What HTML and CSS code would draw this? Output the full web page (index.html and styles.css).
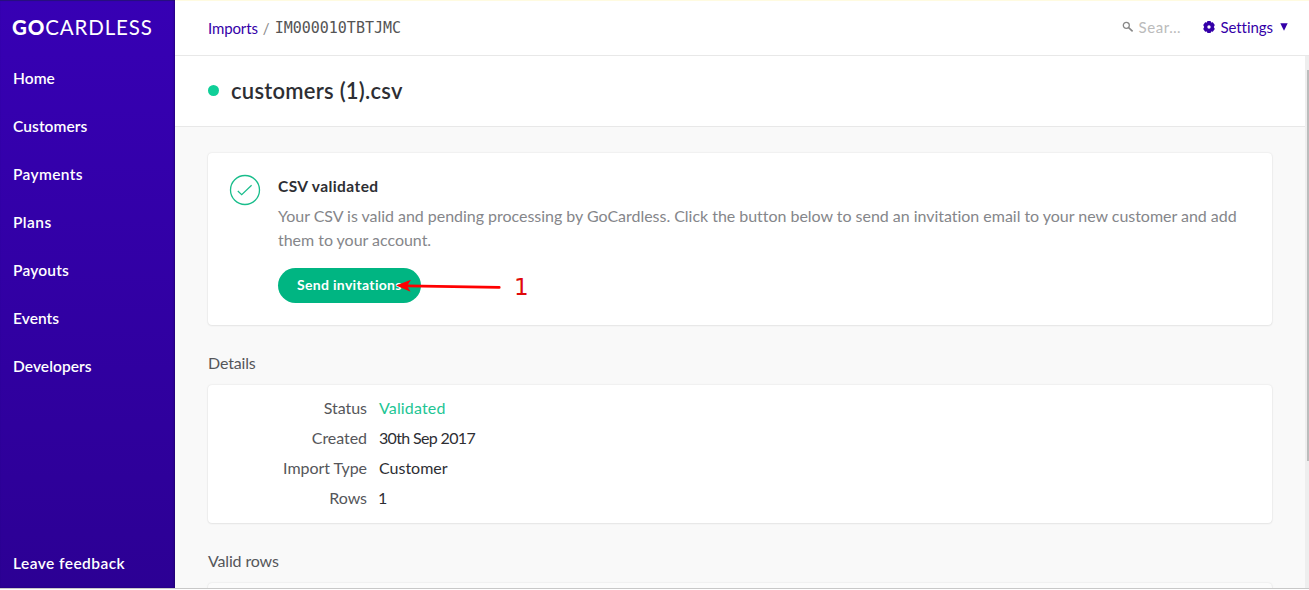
FILE: index.html
```html
<!DOCTYPE html>
<html lang="en">
<head>
<meta charset="utf-8">
<title>Imports / IM000010TBTJMC</title>
<link rel="stylesheet" href="styles.css">
</head>
<body>
<div class="app">
  <aside class="sidebar">
    <div class="logo"><b>GO</b><span>CARDLESS</span></div>
    <nav class="nav">
      <a class="nav-item home"><span>Home</span></a>
      <a class="nav-item customers"><span>Customers</span></a>
      <a class="nav-item payments"><span>Payments</span></a>
      <a class="nav-item plans"><span>Plans</span></a>
      <a class="nav-item payouts"><span>Payouts</span></a>
      <a class="nav-item events"><span>Events</span></a>
      <a class="nav-item developers"><span>Developers</span></a>
    </nav>
    <a class="nav-item feedback"><span>Leave feedback</span></a>
  </aside>
  <div class="main">
    <header class="topbar">
      <div class="crumbs"><a class="crumb-link">Imports</a><span class="slash">/</span><span class="import-id">IM000010TBTJMC</span></div>
      <div class="tools">
        <svg class="search-icon" width="12" height="12" viewBox="0 0 12 12"><circle cx="4.3" cy="4.3" r="3" fill="none" stroke="#888" stroke-width="1.3"/><path d="M6.6 6.6 L10.6 10.4" stroke="#888" stroke-width="1.6"/></svg>
        <span class="search">Sear…</span>
        <svg class="gear" width="12" height="12" viewBox="0 0 12 12"><path fill="#3400a8" fill-rule="evenodd" d="M4.4 0h3.2l.5 1.5 1.7-.3 2 2.7-1 2.1 1 2.1-2 2.7-1.7-.3-.5 1.5H4.4l-.5-1.5-1.7.3-2-2.7 1-2.1-1-2.1 2-2.7 1.7.3zM6 4.3a1.7 1.7 0 1 0 0 3.4 1.7 1.7 0 0 0 0-3.4z"/></svg>
        <span class="settings">Settings</span>
        <svg class="caret" width="8" height="8" viewBox="0 0 8 8"><path fill="#3400a8" d="M.3 .3h7.4L4 7.8z"/></svg>
      </div>
    </header>
    <div class="viewport">
      <div class="page">
        <div class="title-row"><i class="dot"></i><h1>customers (1).csv</h1></div>
        <div class="content">
          <section class="card notice">
            <svg class="check" width="32" height="32" viewBox="0 0 32 32" fill="none" stroke="#19bd8b"><circle cx="16" cy="16" r="14.5" stroke-width="1.3"/><path d="M8.8 17l3.9 3.7 9.9-9.5" stroke-width="1.2"/></svg>
            <div class="notice-body">
              <h2>CSV validated</h2>
              <p>Your CSV is valid and pending processing by GoCardless. Click the button below to send an invitation email to your new customer and add<br>them to your account.</p>
              <div class="action">
                <button class="send"><span>Send invitations</span></button>
                <svg class="arrow" width="108" height="16" viewBox="0 0 108 16"><path d="M12 6.9L104.2 8.4" stroke="#f00" stroke-width="2.8" stroke-linecap="round"/><path d="M1 6.6L16 .8 12 6.9 15.6 12.8z" fill="#f00"/></svg>
                <span class="step">1</span>
              </div>
            </div>
          </section>
          <h3 class="details-title">Details</h3>
          <dl class="card details">
            <dt>Status</dt><dd class="ok">Validated</dd>
            <dt>Created</dt><dd class="date">30th Sep 2017</dd>
            <dt>Import Type</dt><dd>Customer</dd>
            <dt>Rows</dt><dd class="count">1</dd>
          </dl>
          <h3 class="rows-title">Valid rows</h3>
          <section class="card rows"></section>
        </div>
      </div>
      <div class="scrollbar"><i class="thumb"></i></div>
    </div>
  </div>
</div>
</body>
</html>
```
FILE: styles.css
```css
* { box-sizing: border-box; }
body { margin: 0; height: 590px; overflow: hidden; background: #fff; font-family: Lato, "Open Sans", sans-serif; font-size: 16px; font-variant-ligatures: none; color: #2d2e33; }
h1, h2, h3, p, dl, dd { margin: 0; }
.app { display: flex; height: 589px; border-bottom: 1px solid #c8c8c8; }
.sidebar { width: 175px; display: flex; flex-direction: column; background: linear-gradient(#3700b4, #2c0094); color: #fff; padding-left: 12px; box-shadow: inset -1px 0 2px rgba(20, 0, 70, .45), inset 0 1px 0 #2b1287; }
.logo { height: 54px; font-size: 20.5px; line-height: 55px; font-weight: 400; white-space: nowrap; letter-spacing: .85px; }
.logo b { font-weight: 900; letter-spacing: .9px; }
.nav { display: flex; flex-direction: column; padding-left: 1px; }
.nav-item { height: 48px; line-height: 48px; font-weight: 600; font-size: 15.5px; white-space: nowrap; letter-spacing: .08px; }
.payments { letter-spacing: .35px; }
.plans { letter-spacing: .45px; }
.payouts { letter-spacing: .2px; }
.feedback { margin: auto 0 1px; padding-left: 1px; letter-spacing: .45px; }
.main { flex: 1; min-width: 0; display: flex; flex-direction: column; background: #f9f9f9; }
.topbar { height: 56px; flex: none; display: flex; align-items: center; justify-content: space-between; padding: 0 21px 2px 33px; background: #fff; border-top: 1px solid #fffbe0; border-bottom: 1px solid #e8e8e8; font-size: 15px; }
.crumbs, .tools { display: flex; align-items: center; }
.crumbs { padding-top: 1px; }
.crumb-link, .settings { color: #3400a8; }
.crumb-link { letter-spacing: -.12px; }
.slash { color: #888; margin: 0 5px; }
.import-id { font: 15px "DejaVu Sans Mono", monospace; color: #555; letter-spacing: 0; }
.search { color: #bbb; margin: 0 21px 0 4px; width: 44px; white-space: nowrap; letter-spacing: .65px; }
.settings { margin: 0 7px 0 5px; letter-spacing: -.05px; }
.viewport { flex: 1; min-height: 0; display: flex; overflow: hidden; }
.page { flex: 1; min-width: 0; }
.title-row { height: 71px; display: flex; align-items: center; gap: 12px; padding: 0 0 1px 33px; background: #fff; border-bottom: 1px solid #e8e8e8; }
.dot { width: 11px; height: 11px; border-radius: 50%; background: #0fcf98; }
h1 { font-size: 22px; font-weight: 600; line-height: 30px; letter-spacing: .25px; }
.content { padding: 26px 33px 0; }
.card { background: #fff; border-radius: 4px; box-shadow: 0 0 2px rgba(0,0,0,.12), 0 1px 2px rgba(0,0,0,.05); }
.notice { height: 172px; display: flex; padding: 21px 20px 0 21px; gap: 17px; }
.check { flex: none; }
.notice-body { min-width: 0; }
h2 { font-size: 15.5px; font-weight: 700; line-height: 24px; letter-spacing: .42px; }
p { color: #85868a; line-height: 24px; margin-top: 6px; white-space: nowrap; letter-spacing: -.028px; }
.action { position: relative; margin-top: 16px; }
.send { display: block; width: 143px; height: 35px; border: 0; border-radius: 18px; padding: 0 0 2px 19px; text-align: left; white-space: nowrap; background: #00b582; color: #fff; font: 700 14px Lato, sans-serif; letter-spacing: .32px; font-variant-ligatures: none; }
.arrow { position: absolute; left: 117px; top: 11px; }
.step { position: absolute; left: 236px; top: 5px; font: 23px/28px "DejaVu Sans", sans-serif; color: #e00a0a; }
h3 { font-size: 16px; font-weight: 400; color: #55565a; line-height: 24px; letter-spacing: -.15px; }
.details-title { padding: 26px 0 10px; }
.details { height: 138px; padding: 8px 0; display: grid; grid-template-columns: 159px 1fr; grid-auto-rows: 30px; column-gap: 12px; line-height: 30px; }
dt { text-align: right; color: #55565a; white-space: nowrap; letter-spacing: -.05px; }
.date { letter-spacing: -.66px; }
.count { text-indent: -1px; }
.ok { color: #22c594; letter-spacing: .15px; }
.rows-title { padding: 26px 0 10px; }
.rows { height: 100px; background: #fbfbfb; }
.scrollbar { width: 4px; background: #eee; display: flex; justify-content: flex-end; align-items: flex-start; }
.thumb { width: 2px; height: 391px; margin-top: 14px; background: #bcbcbc; }
```
